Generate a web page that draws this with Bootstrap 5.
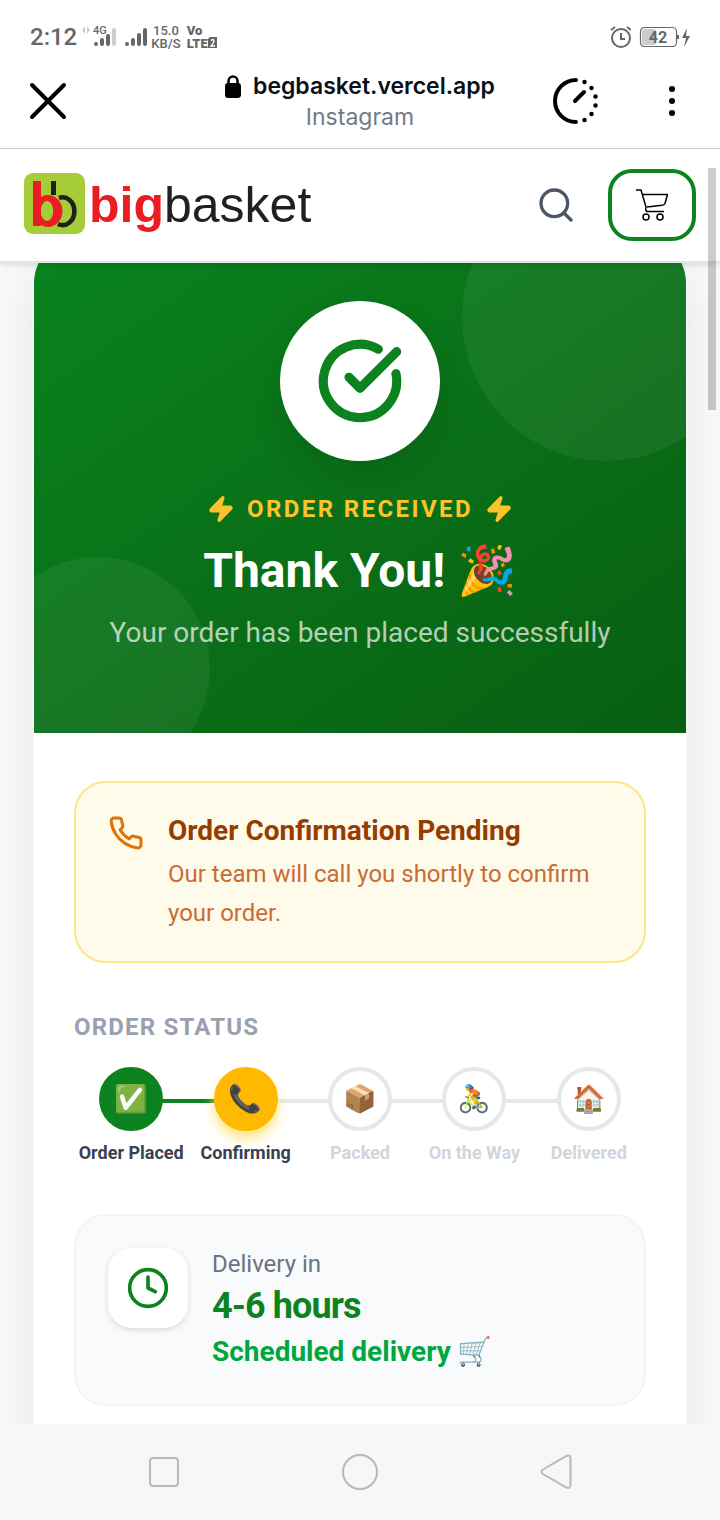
<!DOCTYPE html>
<html lang="en">
<head>
<meta charset="utf-8">
<meta name="viewport" content="width=device-width, initial-scale=1">
<title>Order received - bigbasket</title>
<link href="https://cdn.jsdelivr.net/npm/bootstrap@5.3.0/dist/css/bootstrap.min.css" rel="stylesheet">
<style>
:root { --brand: #0c831f; }
body { font-family: Roboto, "Liberation Sans", "Noto Color Emoji", sans-serif; background: #fff; color: #364153; }
svg { display: block; flex: none; }
.plain-btn { border: 0; background: none; padding: 0; color: inherit; }

/* Phone status bar */
.status-bar { height: 54px; padding: 20px 30px 0; color: #666; }
.clock-text { font-size: 24px; line-height: 34px; font-weight: 500; }
.net-info { gap: 6px; }
.net-speed { font-size: 13px; line-height: 13px; font-weight: 500; }
.volte { font-size: 13px; line-height: 13px; font-weight: 900; }

/* In-app browser bar */
.browser-bar { height: 95px; padding: 0 28px; border-bottom: 1px solid #d5d7da; }
.page-title { padding-top: 2px; }
.site-name { font-family: Inter, Roboto, sans-serif; font-size: 23px; line-height: 31px; font-weight: 600; color: #0b1016; gap: 12px; }
.via-app { font-family: Inter, Roboto, sans-serif; font-size: 23px; line-height: 31px; color: #727a86; }
.bar-tools { gap: 52px; }

/* Shop header */
.shop-header { padding: 20px 24px; border-bottom: 2px solid #e3e4e6; box-shadow: 0 2px 6px rgba(0,0,0,.12); z-index: 2; background: #fff; }
.wordmark { font-family: "Liberation Sans", Arial, sans-serif; font-size: 50px; line-height: 72px; color: #231f20; text-decoration: none; }
.wordmark b { color: #ed1c24; }
.cart-btn { width: 88px; height: 72px; border: 4px solid var(--brand); border-radius: 24px; background: #fff; color: #000; }
.scroll-thumb { top: 168px; right: 4px; width: 8px; height: 242px; background: rgba(0,0,0,.2); z-index: 3; }

/* Order card */
.page-area { background: #f9fafb; min-height: 0; }
.order-card { margin: -28px 32px 0; min-height: 1400px; border: 2px solid #f3f4f6; border-radius: 48px; background: #fff; box-shadow: 0 20px 50px rgba(0,0,0,.09); overflow: hidden; }
.hero { padding: 64px 40px 80px; background: linear-gradient(145deg, #08841e 0%, #0a7018 50%, #075f12 100%); color: #fff; }
.bubble { position: absolute; border-radius: 50%; background: rgba(255,255,255,.06); }
.bubble-a { width: 288px; height: 288px; top: -64px; right: -64px; }
.bubble-b { width: 224px; height: 224px; bottom: -48px; left: -48px; }
.tick-disc { width: 160px; height: 160px; margin-bottom: 32px; color: var(--brand); box-shadow: 0 16px 32px rgba(0,0,0,.1); }
.kicker { font-size: 24px; line-height: 32px; font-weight: 700; letter-spacing: .1em; color: #fbc42d; gap: 12px; margin-bottom: 16px; }
.hero h1 { font-size: 48px; line-height: 60px; font-weight: 700; margin-bottom: 12px; }
.hero-sub { font-size: 28px; line-height: 40px; color: rgba(255,255,255,.7); }

.order-body { padding: 48px 40px; }
.notice { padding: 28px 32px; gap: 24px; border: 2px solid #fee685; border-radius: 32px; background: #fffbeb; margin-bottom: 48px; }
.notice svg { margin-top: 4px; color: #e17100; }
.notice h2 { font-size: 28px; line-height: 40px; font-weight: 700; color: #973c00; margin-bottom: 4px; }
.notice p { font-size: 24px; line-height: 39px; color: #c96c34; }

.section-label { font-size: 24px; line-height: 32px; font-weight: 700; letter-spacing: .05em; color: #99a1af; margin-bottom: 24px; }
.steps { margin-bottom: 48px; }
.step { flex: 1 1 0; text-align: center; position: relative; color: #d1d5dc; }
.step + .step::before { content: ""; position: absolute; top: 32px; right: 50%; width: 100%; height: 4px; background: #e5e7eb; }
.step.reached + .step.reached::before { background: var(--brand); }
.step-dot { position: relative; z-index: 1; width: 64px; height: 64px; border: 4px solid #e5e7eb; background: #fff; font-size: 27px; line-height: 32px; color: #000; }
.step.reached { color: #364153; }
.step.reached .step-dot { border-color: var(--brand); background: var(--brand); }
.step.current .step-dot { border-color: #ffb900; background: #ffb900; box-shadow: 0 8px 12px #fee685; }
.step-name { margin-top: 8px; font-size: 18px; line-height: 27px; font-weight: 700; white-space: nowrap; }

.delivery { padding: 32px; gap: 24px; border: 2px solid #f3f4f6; border-radius: 32px; background: #f9fafb; }
.delivery-icon { width: 80px; height: 80px; border-radius: 24px; color: var(--brand); box-shadow: 0 2px 6px rgba(0,0,0,.13); }
.eta-label { font-size: 24px; line-height: 32px; color: #6a7282; margin-bottom: 4px; }
.eta { font-size: 36px; line-height: 44px; font-weight: 700; letter-spacing: -.025em; color: var(--brand); margin-bottom: 4px; }
.eta-note { font-size: 28px; line-height: 40px; font-weight: 700; color: #00a63e; }

/* Phone navigation keys */
.key-bar { height: 96px; background: #f7f7f7; color: #b8b8b8; z-index: 2; }
.key-row { max-width: 588px; }
</style>
</head>
<body class="vh-100 d-flex flex-column overflow-hidden position-relative">

<div class="status-bar d-flex justify-content-between flex-shrink-0">
  <div class="d-flex align-items-center">
    <span class="clock-text">2:12</span>
    <svg width="36" height="34" viewBox="0 0 36 34" class="ms-1" aria-hidden="true">
      <path d="M4 6l-3 4 3 4zM6 6l3 4-3 4z" fill="#ccc"/>
      <text x="12" y="14" font-size="11" font-weight="500" fill="#666">4G</text>
      <g stroke="#666" stroke-width="4" stroke-linecap="round"><path d="M15 24v0M21 20v4M27 16v8"/><path d="M33 10v14" stroke="#ccc"/></g>
    </svg>
    <svg width="22" height="34" viewBox="0 0 22 34" class="ms-2" aria-hidden="true">
      <g stroke="#666" stroke-width="4" stroke-linecap="round"><path d="M2 24v0M8 20v4M14 15v9M20 10v14"/></g>
    </svg>
    <div class="net-info d-flex align-items-center ms-1">
      <span class="net-speed text-center">15.0<br>KB/S</span>
      <span class="volte">Vo<br>LTE</span>
    </div>
    <svg width="9" height="34" viewBox="0 0 9 34" aria-hidden="true"><path d="M2 17h7v11H0V19z" fill="#666"/><path d="M3 21q2-3 3 0q0 2-3 5h4" fill="none" stroke="#fff" stroke-width="1.300"/></svg>
  </div>
  <div class="d-flex align-items-center">
    <svg width="22" height="26" viewBox="0 0 22 26" fill="none" stroke="#666" stroke-width="2" aria-hidden="true"><circle cx="12" cy="14" r="9"/><path d="M12 9v6h4M2 6l4-3M22 6l-4-3"/></svg>
    <svg width="51" height="22" viewBox="0 0 51 22" class="ms-2" aria-hidden="true"><rect x="1.500" y="1.500" width="36" height="19" rx="4" fill="none" stroke="#666" stroke-width="1.200"/><rect x="3" y="3" width="14" height="16" rx="2" fill="#ccc"/><path d="M39 9v4" stroke="#666" stroke-width="2"/><text x="19" y="17" text-anchor="middle" font-size="16" font-weight="700" fill="#666">42</text><path d="M48 2l-5 10h4l-2 9 6-11h-4z" fill="#666"/></svg>
  </div>
</div>

<div class="browser-bar d-flex align-items-center flex-shrink-0 position-relative">
  <button type="button" class="plain-btn" aria-label="Close"><svg width="40" height="40" viewBox="0 0 40 40" fill="none" stroke="#000" stroke-width="4" stroke-linecap="round"><path d="M4 4l32 32M36 4L4 36"/></svg></button>
  <div class="page-title position-absolute start-50 translate-middle-x text-center">
    <div class="site-name d-flex align-items-center"><svg width="16" height="24" viewBox="2 0 16 24" aria-hidden="true"><rect x="2" y="8" width="16" height="15" rx="3"/><path d="M5.500 10V6a4.500 4.500 0 0 1 9 0v4" fill="none" stroke="#000" stroke-width="2.500"/></svg>begbasket.vercel.app</div>
    <div class="via-app">Instagram</div>
  </div>
  <div class="bar-tools ms-auto d-flex align-items-center">
    <button type="button" class="plain-btn" aria-label="Page speed"><svg width="48" height="48" viewBox="0 0 48 48" fill="none" stroke="#000" stroke-width="4" stroke-linecap="round"><path d="M24 3a21 21 0 0 0 0 42M23 24l9-9"/><path d="M32.500 5v0M39.500 11v0M43.500 19.500v0M43.500 28.500v0M39.500 37v0M32.500 43v0" stroke-width="4.500"/></svg></button>
    <button type="button" class="plain-btn" aria-label="More"><svg width="40" height="40" viewBox="0 0 40 40"><circle cx="20" cy="8" r="3"/><circle cx="20" cy="20" r="3"/><circle cx="20" cy="32" r="3"/></svg></button>
  </div>
</div>

<header class="shop-header d-flex align-items-center flex-shrink-0">
  <a href="#" class="wordmark d-flex align-items-center" aria-label="bigbasket home">
    <svg width="61" height="61" viewBox="0 0 61 61" class="mb-1" aria-hidden="true">
      <rect width="61" height="61" rx="9" fill="#a5cd39"/>
      <rect x="27" y="8" width="5" height="14" fill="#231f20"/>
      <path d="M35 25A11.800 13.800 0 0 1 50.400 38A11.800 13.800 0 0 1 34 51" fill="none" stroke="#231f20" stroke-width="4.600"/>
      <rect x="9" y="8" width="8" height="45" fill="#ed1c24"/>
      <path fill="#ed1c24" fill-rule="evenodd" d="M24 22a14.500 16 0 0 1 0 32a14.500 16 0 0 1 0-32zM23 28a6.300 10 0 0 0 0 20a6.300 10 0 0 0 0-20z"/>
    </svg>
    <span class="ms-1"><b>big</b>basket</span>
  </a>
  <div class="ms-auto d-flex align-items-center">
    <button type="button" class="plain-btn me-4" aria-label="Search"><svg width="40" height="40" viewBox="0 0 24 24" fill="none" stroke="#4a5565" stroke-width="2" stroke-linecap="round"><circle cx="11" cy="11" r="8"/><path d="M21 21l-4.300-4.300"/></svg></button>
    <button type="button" class="cart-btn d-flex align-items-center justify-content-center ms-2 p-0" aria-label="Cart"><svg width="32" height="32" viewBox="0 0 32 32" fill="none" stroke="#000" stroke-width="1.500"><path d="M0 1h5l5 17q-1 5 2 4.500h16M7 5.500h24.500l-2.500 9q-1 2-5 2l-13 1.500"/><circle cx="10" cy="28" r="3"/><circle cx="24" cy="28" r="3"/></svg></button>
  </div>
</header>
<div class="scroll-thumb position-absolute"></div>

<main class="page-area flex-grow-1 overflow-hidden">
  <article class="order-card">
    <section class="hero position-relative overflow-hidden text-center">
      <div class="bubble bubble-a"></div>
      <div class="bubble bubble-b"></div>
      <div class="position-relative">
        <div class="tick-disc bg-white rounded-circle d-flex align-items-center justify-content-center mx-auto"><svg width="88" height="88" viewBox="0 0 24 24" fill="none" stroke="currentColor" stroke-width="2.500" stroke-linecap="round" stroke-linejoin="round" aria-hidden="true"><path d="M21.801 10A10 10 0 1 1 17 3.335"/><path d="m9 11 3 3L22 4"/></svg></div>
        <div class="kicker d-flex align-items-center justify-content-center">
          <svg width="28" height="28" viewBox="0 0 24 24" fill="currentColor" stroke="currentColor" stroke-width="2" stroke-linejoin="round" aria-hidden="true"><path d="M4 14a1 1 0 0 1-.78-1.63l9.900-10.200a.5.5 0 0 1 .86.46l-1.920 6.020A1 1 0 0 0 13 10h7a1 1 0 0 1 .78 1.630l-9.900 10.200a.5.5 0 0 1-.86-.46l1.920-6.020A1 1 0 0 0 11 14z"/></svg>
          <span>ORDER RECEIVED</span>
          <svg width="28" height="28" viewBox="0 0 24 24" fill="currentColor" stroke="currentColor" stroke-width="2" stroke-linejoin="round" aria-hidden="true"><path d="M4 14a1 1 0 0 1-.78-1.63l9.900-10.200a.5.5 0 0 1 .86.46l-1.920 6.020A1 1 0 0 0 13 10h7a1 1 0 0 1 .78 1.630l-9.900 10.200a.5.5 0 0 1-.86-.46l1.920-6.020A1 1 0 0 0 11 14z"/></svg>
        </div>
        <h1>Thank You! 🎉</h1>
        <p class="hero-sub mb-0">Your order has been placed successfully</p>
      </div>
    </section>

    <div class="order-body">
      <section class="notice d-flex align-items-start">
        <svg width="36" height="36" viewBox="0 0 24 24" fill="none" stroke="currentColor" stroke-width="2" stroke-linecap="round" stroke-linejoin="round" aria-hidden="true"><path d="M22 16.920v3a2 2 0 0 1-2.180 2 19.790 19.790 0 0 1-8.630-3.070 19.500 19.500 0 0 1-6-6 19.790 19.790 0 0 1-3.070-8.670A2 2 0 0 1 4.110 2h3a2 2 0 0 1 2 1.720 12.840 12.840 0 0 0 .7 2.810 2 2 0 0 1-.45 2.110L8.090 9.910a16 16 0 0 0 6 6l1.270-1.270a2 2 0 0 1 2.110-.45 12.840 12.840 0 0 0 2.810.7A2 2 0 0 1 22 16.920z"/></svg>
        <div>
          <h2>Order Confirmation Pending</h2>
          <p class="mb-0">Our team will call you shortly to confirm your order.</p>
        </div>
      </section>

      <h2 class="section-label">ORDER STATUS</h2>
      <ol class="steps list-unstyled d-flex">
        <li class="step reached"><div class="step-dot rounded-circle d-flex align-items-center justify-content-center mx-auto">✅</div><div class="step-name">Order Placed</div></li>
        <li class="step reached current"><div class="step-dot rounded-circle d-flex align-items-center justify-content-center mx-auto">📞</div><div class="step-name">Confirming</div></li>
        <li class="step"><div class="step-dot rounded-circle d-flex align-items-center justify-content-center mx-auto">📦</div><div class="step-name">Packed</div></li>
        <li class="step"><div class="step-dot rounded-circle d-flex align-items-center justify-content-center mx-auto">🚴</div><div class="step-name">On the Way</div></li>
        <li class="step"><div class="step-dot rounded-circle d-flex align-items-center justify-content-center mx-auto">🏠</div><div class="step-name">Delivered</div></li>
      </ol>

      <section class="delivery d-flex align-items-start">
        <div class="delivery-icon bg-white d-flex align-items-center justify-content-center flex-shrink-0"><svg width="44" height="44" viewBox="0 0 24 24" fill="none" stroke="currentColor" stroke-width="2" stroke-linecap="round" stroke-linejoin="round" aria-hidden="true"><circle cx="12" cy="12" r="10"/><path d="M12 6v6l4 2"/></svg></div>
        <div>
          <div class="eta-label">Delivery in</div>
          <div class="eta">4-6 hours</div>
          <div class="eta-note">Scheduled delivery 🛒</div>
        </div>
      </section>
    </div>
  </article>
</main>

<nav class="key-bar flex-shrink-0 d-flex justify-content-center" aria-label="System navigation">
  <div class="key-row d-flex w-100">
    <button type="button" class="plain-btn flex-fill d-flex align-items-center justify-content-center" aria-label="Recent apps"><svg width="38" height="38" viewBox="0 0 38 38" fill="none" stroke="#b8b8b8" stroke-width="2"><rect x="5" y="5" width="28" height="28" rx="3"/></svg></button>
    <button type="button" class="plain-btn flex-fill d-flex align-items-center justify-content-center" aria-label="Home"><svg width="38" height="38" viewBox="0 0 38 38" fill="none" stroke="#b8b8b8" stroke-width="2"><circle cx="19" cy="19" r="17"/></svg></button>
    <button type="button" class="plain-btn flex-fill d-flex align-items-center justify-content-center" aria-label="Back"><svg width="38" height="38" viewBox="0 0 38 38" fill="none" stroke="#b8b8b8" stroke-width="2"><path d="M6 16.500L29.500 2.800Q33 1.500 33.500 5v27q-.5 4-4 2.500L6 21Q3 18.700 6 16.500z"/></svg></button>
  </div>
</nav>
<script src="https://cdn.jsdelivr.net/npm/bootstrap@5.3.0/dist/js/bootstrap.bundle.min.js"></script>
</body>
</html>
